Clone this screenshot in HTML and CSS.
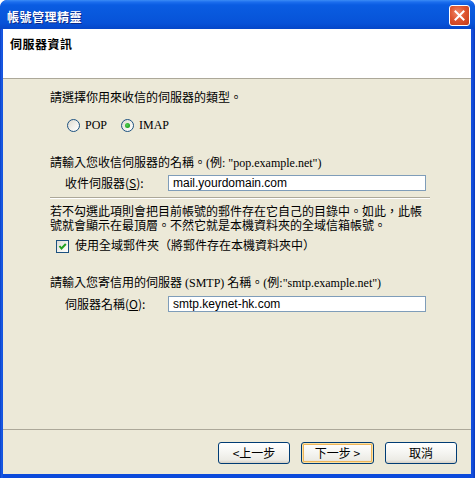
FILE: index.html
```html
<!DOCTYPE html>
<html lang="zh-Hant">
<head>
<meta charset="utf-8">
<title>帳號管理精靈</title>
<link rel="stylesheet" href="styles.css">
</head>
<body>
<div class="window">
  <div class="titlebar">
    <span class="title">帳號管理精靈</span>
    <span class="close"><svg width="11" height="11" viewBox="0 0 11 11"><path d="M1.5 1.5 L9.5 9.5 M9.5 1.5 L1.5 9.5" stroke="#fff" stroke-width="2" stroke-linecap="square" fill="none"/></svg></span>
  </div>
  <div class="client">
    <div class="header"><span class="header-title">伺服器資訊</span></div>
    <div class="content">
      <p class="line l1">請選擇你用來收信的伺服器的類型。</p>
      <div class="radios">
        <span class="opt"><span class="radio"></span>POP</span>
        <span class="opt"><span class="radio checked"></span>IMAP</span>
      </div>
      <p class="line l2">請輸入您收信伺服器的名稱。(例: "pop.example.net")</p>
      <div class="field f1">
        <span class="lbl">收件伺服器(<u>S</u>):</span>
        <div class="input">mail.yourdomain.com</div>
      </div>
      <div class="sep"></div>
      <p class="para">若不勾選此項則會把目前帳號的郵件存在它自己的目錄中。如此，此帳號就會顯示在最頂層。不然它就是本機資料夾的全域信箱帳號。</p>
      <div class="check">
        <span class="box"><svg width="11" height="11" viewBox="0 0 11 11"><path d="M2.5 5 L4.5 7.5 L8.8 3" stroke="#21A121" stroke-width="2" fill="none"/></svg></span>
        <span>使用全域郵件夾（將郵件存在本機資料夾中）</span>
      </div>
      <p class="line l3">請輸入您寄信用的伺服器 (SMTP) 名稱。(例:"smtp.example.net")</p>
      <div class="field f2">
        <span class="lbl">伺服器名稱(<u>O</u>):</span>
        <div class="input">smtp.keynet-hk.com</div>
      </div>
    </div>
    <div class="buttons">
      <button class="btn">&lt;上一步</button>
      <button class="btn default">下一步 &gt;</button>
      <button class="btn">取消</button>
    </div>
  </div>
</div>
</body>
</html>
```
FILE: styles.css
```css
* { box-sizing: border-box; }
html, body { margin: 0; padding: 0; background: #ffffff; }
body {
  width: 475px;
  height: 478px;
  font-family: "Liberation Serif", "Noto Sans CJK TC", serif;
  font-size: 12px;
  color: #000;
}
.window {
  width: 475px;
  height: 478px;
  display: flex;
  flex-direction: column;
  background: linear-gradient(90deg, #0A3FC8 0, #1D5FE6 2px, #0B4ADB 3px, #0B4ADB 471px, #1652E0 472px, #0838BF 475px);
  border-radius: 7px 7px 0 0;
  overflow: hidden;
}
.titlebar {
  height: 29px;
  flex: none;
  display: flex;
  align-items: flex-start;
  justify-content: space-between;
  padding: 0 5px 0 7px;
  background: linear-gradient(180deg, #3B8CF5 0, #1C6EEE 2px, #0A5CE2 5px, #0858DC 50%, #0752D8 80%, #0546C8 100%);
  border-radius: 7px 7px 0 0;
}
.title {
  margin-top: 9px;
  line-height: 16px;
  font-family: "Noto Sans CJK TC", sans-serif;
  font-weight: bold;
  font-size: 12px;
  letter-spacing: 0.5px;
  color: #fff;
  text-shadow: 1px 1px 0 #0A2A8A;
}
.close {
  margin-top: 5px;
  width: 21px;
  height: 21px;
  border: 1px solid #fff;
  border-radius: 3px;
  background: radial-gradient(circle at 40% 35%, #F08A6A 0, #DE5530 45%, #C33A16 100%);
  display: flex;
  align-items: center;
  justify-content: center;
}
.client {
  flex: 1;
  margin: 0 4px 4px 3px;
  background: #ECE9D8;
  display: flex;
  flex-direction: column;
}
.header {
  height: 50px;
  flex: none;
  background: #fff;
  border-bottom: 1px solid #ACA899;
  padding: 7px 0 0 7px;
}
.header-title {
  display: block;
  line-height: 16px;
  font-family: "Noto Sans CJK TC", sans-serif;
  font-weight: bold;
  font-size: 12px;
  letter-spacing: 0.5px;
}
.content {
  flex: 1;
  padding: 11px 41px 0 47px;
  display: flex;
  flex-direction: column;
}
.line { margin: 0; line-height: 16px; white-space: nowrap; }
.l2 { margin-top: 22px; }
.l3 { margin-top: 21px; }
.radios {
  margin-top: 11px;
  height: 16px;
  padding-left: 17px;
  display: flex;
  align-items: center;
  gap: 14px;
}
.opt { display: flex; align-items: center; line-height: 16px; }
.radio {
  width: 13px;
  height: 13px;
  margin-right: 5px;
  border-radius: 50%;
  border: 1px solid #1C5180;
  background: linear-gradient(135deg, #DCD9CF 0, #F4F3EE 60%, #fff 100%);
  display: flex;
  align-items: center;
  justify-content: center;
}
.radio.checked::after {
  content: "";
  width: 5px;
  height: 5px;
  border-radius: 50%;
  background: radial-gradient(circle at 40% 40%, #55D055 0, #21A121 70%);
}
.field {
  height: 18px;
  display: flex;
  align-items: center;
  padding-left: 15px;
}
.f1 { margin-top: 3px; }
.f2 { margin-top: 4px; }
.lbl {
  width: 103px;
  flex: none;
  font-family: "Noto Sans CJK TC", sans-serif;
  line-height: 16px;
}
.input {
  width: 258px;
  height: 16px;
  border: 1px solid #7F9DB9;
  background: #fff;
  padding-left: 4px;
  font-family: "Liberation Sans", sans-serif;
  font-size: 12px;
  line-height: 14px;
  color: #000;
}
.sep {
  margin-top: 5px;
  height: 2px;
  border-top: 1px solid #ACA899;
  border-bottom: 1px solid #fff;
}
.para {
  margin: 6px 0 0;
  line-height: 14px;
}
.check {
  margin-top: 5px;
  height: 16px;
  padding-left: 6px;
  display: flex;
  align-items: center;
  line-height: 16px;
}
.box {
  width: 13px;
  height: 13px;
  margin-right: 6px;
  border: 1px solid #1C5180;
  background: linear-gradient(135deg, #DCDCD7 0, #F4F3EE 60%, #fff 100%);
  display: flex;
  align-items: center;
  justify-content: center;
}
.buttons {
  height: 45px;
  flex: none;
  border-top: 1px solid #ACA899;
  padding: 12px 14px 0 0;
  display: flex;
  justify-content: flex-end;
  align-items: flex-start;
  gap: 11px;
}
.btn {
  width: 72px;
  height: 22px;
  margin: 0;
  padding: 0;
  border: 1px solid #003C74;
  border-radius: 3px;
  background: linear-gradient(180deg, #FFFFFF 0, #F7F7F4 40%, #ECEBE5 85%, #D6D0C5 100%);
  font-family: "Noto Sans CJK TC", sans-serif;
  font-size: 12px;
  line-height: 18px;
  color: #000;
}
.btn.default {
  width: 73px;
  box-shadow: inset 0 0 0 1px #FCE2A4, inset 0 0 0 2px #EDB55A;
}
```
